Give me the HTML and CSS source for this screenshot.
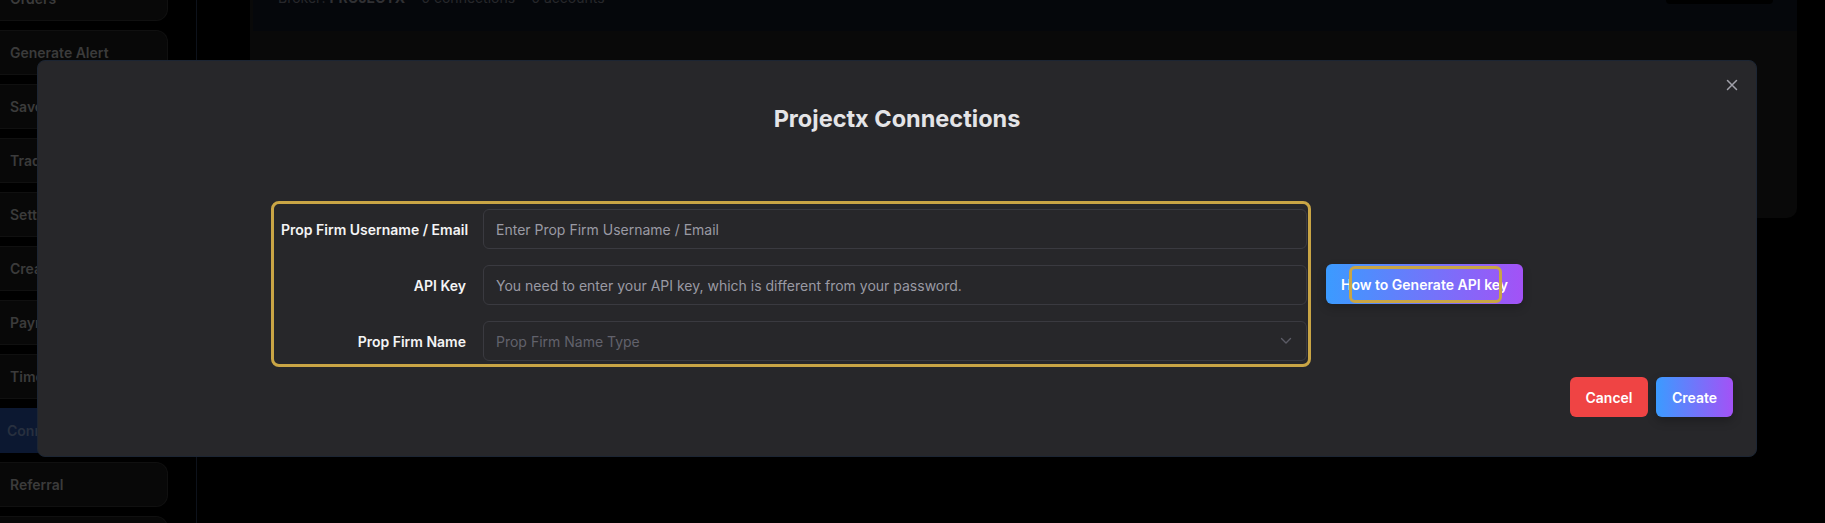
FILE: index.html
```html
<!DOCTYPE html>
<html lang="en">
<head>
  <meta charset="UTF-8" />
  <title>Projectx Connections</title>
  <link rel="stylesheet" href="styles.css">
</head>
<body>
  <div class="layout">
    <aside class="sidebar">
      <div class="nav-item">Orders</div>
      <div class="nav-item">Generate Alert</div>
      <div class="nav-item">Saved Alerts</div>
      <div class="nav-item">Trades</div>
      <div class="nav-item">Settings</div>
      <div class="nav-item">Create Strategy</div>
      <div class="nav-item">Payments</div>
      <div class="nav-item">Timezone</div>
      <div class="nav-item active">Connections</div>
      <div class="nav-item">Referral</div>
      <div class="nav-item">Support</div>
    </aside>

    <main class="main">
      <div class="panel">
        <div class="panel-head">
          <div class="broker-line">
            <span>Broker: <b>PROJECTX</b></span>
            <span class="sep">·</span>
            <span>0 connections</span>
            <span class="sep">·</span>
            <span>0 accounts</span>
          </div>
          <div class="head-btn"></div>
        </div>
      </div>
    </main>
  </div>

  <div class="overlay">
    <div class="modal">
      <button class="close-btn" aria-label="Close">
        <svg width="12" height="12" viewBox="0 0 12 12"><path d="M1.5 1.5l9 9M10.5 1.5l-9 9" stroke="#a1a1aa" stroke-width="1.5" stroke-linecap="round"/></svg>
      </button>

      <h2 class="modal-title">Projectx Connections</h2>

      <div class="form-row">
        <div class="form-box">
          <label class="field-label">Prop Firm Username / Email</label>
          <input class="field" type="text" placeholder="Enter Prop Firm Username / Email">

          <label class="field-label">API Key</label>
          <input class="field" type="text" placeholder="You need to enter your API key, which is different from your password.">

          <label class="field-label">Prop Firm Name</label>
          <div class="field select">
            <span>Prop Firm Name Type</span>
            <svg width="12" height="8" viewBox="0 0 12 8"><path d="M1.5 1.5l4.5 4.5 4.5-4.5" fill="none" stroke="#5b5b66" stroke-width="1.4" stroke-linecap="round" stroke-linejoin="round"/></svg>
          </div>
        </div>

        <button class="btn gradient help-btn">
          How to Generate API key
          <span class="highlight"></span>
        </button>
      </div>

      <div class="modal-footer">
        <button class="btn danger">Cancel</button>
        <button class="btn gradient shadow">Create</button>
      </div>
    </div>
  </div>
</body>
</html>
```

FILE: styles.css
```css
* { box-sizing: border-box; }
body { margin: 0; background: #000; font-family: Inter, "Noto Sans", sans-serif; overflow: hidden; height: 523px; }

.layout { display: flex; height: 523px; overflow: hidden; }

.sidebar { width: 197px; height: 547px; overflow: hidden; border-right: 1px solid #0d121b; padding-right: 28px; display: flex; flex-direction: column; gap: 9px; margin-top: -24px; }
.nav-item { height: 45px; flex-shrink: 0; display: flex; align-items: center; padding-left: 10px; background: #080808; border: 1px solid #101010; border-left: none; border-radius: 0 12px 12px 0; color: #3b3b3b; font-size: 14px; font-weight: 600; white-space: nowrap; overflow: hidden; }
.nav-item.active { background: #0c1831; border-color: #0c1831; color: #28303f; padding-left: 7px; }

.main { flex: 1; padding-left: 53px; padding-right: 28px; }
.panel { height: 218px; background: #090909; padding-left: 3px; border-radius: 0 0 10px 10px; }
.panel-head { height: 31px; background: #05070b; display: flex; justify-content: space-between; padding: 0 24px 0 25px; }
.broker-line { margin-top: -12px; color: #27272b; font-size: 14px; line-height: 20px; display: flex; gap: 6px; }
.broker-line b { color: #303033; }
.head-btn { width: 107px; height: 4px; background: #000; border-radius: 0 0 6px 6px; }

.overlay { position: fixed; inset: 0; padding: 60px 0 0 37px; }
.modal { position: relative; width: 1720px; height: 397px; background: #27272a; border: 1px solid #1c2533; border-radius: 8px; padding-top: 42px; }

.close-btn { position: absolute; top: 18px; right: 18px; background: none; border: none; padding: 0; width: 12px; height: 12px; display: flex; }

.modal-title { margin: 0; text-align: center; color: #e4e4e7; font-size: 23.5px; line-height: 32px; font-weight: 700; }

.form-row { margin-top: 66px; display: flex; align-items: center; justify-content: center; gap: 15px; }
.form-box { width: 1040px; border: 3px solid #c9a545; border-radius: 8px; padding: 5px 1px 3px 7px; display: grid; grid-template-columns: 185px 1fr; column-gap: 17px; row-gap: 16px; align-items: center; }
.field-label { text-align: right; color: #f4f4f5; font-size: 14px; font-weight: 600; white-space: nowrap; }
.field { height: 40px; width: 100%; background: #27272a; border: 1px solid #3a3a40; border-radius: 6px; padding: 0 12px; color: #e4e4e7; font-family: inherit; font-size: 14px; outline: none; }
.field::placeholder { color: #9a9aa4; }
.select { display: flex; align-items: center; justify-content: space-between; color: #62626c; padding-right: 14px; }

.btn { height: 40px; border: none; border-radius: 6px; padding: 0 16px; color: #fff; font-family: inherit; font-size: 14px; font-weight: 600; }
.gradient { background: linear-gradient(90deg, #3b9bff, #a352f6); }
.danger { background: #ef4444; }
.shadow { box-shadow: 0 4px 10px rgba(0,0,0,0.25); }

.help-btn { position: relative; width: 197px; padding: 0; box-shadow: 0 4px 10px rgba(0,0,0,0.2); }
.highlight { position: absolute; left: 23px; top: 2px; width: 153px; height: 37px; border: 3px solid #c9a545; border-radius: 6px; }

.modal-footer { margin-top: 10px; display: flex; justify-content: flex-end; gap: 8px; padding-right: 23px; }
.modal-footer .btn { width: 78px; padding: 0; }
.modal-footer .gradient { width: 77px; }
```
